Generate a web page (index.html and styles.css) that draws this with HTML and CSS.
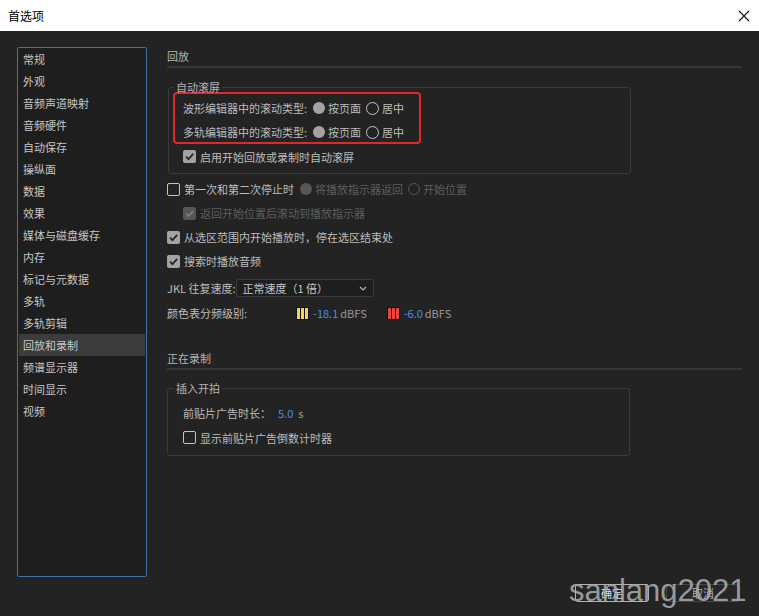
FILE: index.html
```html
<!DOCTYPE html>
<html lang="zh-CN">
<head>
<meta charset="utf-8">
<title>首选项</title>
<link rel="stylesheet" href="styles.css">
</head>
<body>
<div class="window">
  <div class="titlebar">
    <span class="title">首选项</span>
    <svg class="close" width="12" height="12" viewBox="0 0 12 12"><path d="M1 1L11 11M11 1L1 11" stroke="#111" stroke-width="1.1" fill="none"/></svg>
  </div>
  <div class="content">
    <ul class="sidebar">
      <li>常规</li>
      <li>外观</li>
      <li>音频声道映射</li>
      <li>音频硬件</li>
      <li>自动保存</li>
      <li>操纵面</li>
      <li>数据</li>
      <li>效果</li>
      <li>媒体与磁盘缓存</li>
      <li>内存</li>
      <li>标记与元数据</li>
      <li>多轨</li>
      <li>多轨剪辑</li>
      <li class="active">回放和录制</li>
      <li>频谱显示器</li>
      <li>时间显示</li>
      <li>视频</li>
    </ul>
    <div class="main">
      <div class="section-head">回放</div>
      <div class="group g1">
        <div class="group-title">自动滚屏</div>
        <div class="redbox">
          <div class="row">
            <span class="label">波形编辑器中的滚动类型:</span>
            <span class="rb on"></span><span class="opt">按页面</span>
            <span class="rb"></span><span class="opt">居中</span>
          </div>
          <div class="row">
            <span class="label">多轨编辑器中的滚动类型:</span>
            <span class="rb on"></span><span class="opt">按页面</span>
            <span class="rb"></span><span class="opt">居中</span>
          </div>
        </div>
        <div class="row in1">
          <span class="cb on"><svg viewBox="0 0 13 13"><path d="M3 6.6L5.5 9.2L10.2 3.9" /></svg></span>
          <span class="cbt">启用开始回放或录制时自动滚屏</span>
        </div>
      </div>

      <div class="rows">
        <div class="row">
          <span class="cb off"></span>
          <span class="cbt">第一次和第二次停止时</span>
          <span class="rb on dis r1"></span><span class="opt dis">将播放指示器返回</span>
          <span class="rb dis"></span><span class="opt dis">开始位置</span>
        </div>
        <div class="row in2">
          <span class="cb on dis"><svg viewBox="0 0 13 13"><path d="M3 6.6L5.5 9.2L10.2 3.9" /></svg></span>
          <span class="cbt dis">返回开始位置后滚动到播放指示器</span>
        </div>
        <div class="row">
          <span class="cb on"><svg viewBox="0 0 13 13"><path d="M3 6.6L5.5 9.2L10.2 3.9" /></svg></span>
          <span class="cbt">从选区范围内开始播放时，停在选区结束处</span>
        </div>
        <div class="row">
          <span class="cb on"><svg viewBox="0 0 13 13"><path d="M3 6.6L5.5 9.2L10.2 3.9" /></svg></span>
          <span class="cbt">搜索时播放音频</span>
        </div>
        <div class="row jkl">
          <span class="label">JKL 往复速度:</span>
          <div class="select">
            <span>正常速度（1 倍）</span>
            <svg class="chev" width="8" height="5" viewBox="0 0 8 5"><path d="M1 1L4 4L7 1" /></svg>
          </div>
        </div>
        <div class="row meters">
          <span class="label">颜色表分频级别:</span>
          <svg class="meter m1" width="13" height="13" viewBox="0 0 13 13"><rect width="13" height="13" fill="#111"/><rect x="1" y="1" width="3" height="11" fill="#f2d35a"/><rect x="5" y="1" width="3" height="11" fill="#f2d35a"/><rect x="9" y="1" width="3" height="11" fill="#f2d35a"/></svg>
          <span class="num">-18.1</span><span class="unit">dBFS</span>
          <svg class="meter m2" width="13" height="13" viewBox="0 0 13 13"><rect width="13" height="13" fill="#111"/><rect x="1" y="1" width="3" height="11" fill="#e8473f"/><rect x="5" y="1" width="3" height="11" fill="#e8473f"/><rect x="9" y="1" width="3" height="11" fill="#e8473f"/></svg>
          <span class="num">-6.0</span><span class="unit">dBFS</span>
        </div>
      </div>

      <div class="section-head rec">正在录制</div>
      <div class="group g2">
        <div class="group-title">插入开拍</div>
        <div class="row tall">
          <span class="label">前贴片广告时长：</span>
          <span class="num val">5.0</span><span class="unit s">s</span>
        </div>
        <div class="row tall">
          <span class="cb off"></span>
          <span class="cbt">显示前贴片广告倒数计时器</span>
        </div>
      </div>
    </div>
  </div>
  <div class="footer">
    <button class="btn primary">确定</button>
    <button class="btn">取消</button>
  </div>
  <div class="watermark">sanlang2021</div>
</div>
</body>
</html>
```

FILE: styles.css
```css
html, body {
  margin: 0;
  padding: 0;
  background: #232323;
}
body {
  font-family: "Noto Sans CJK SC", "Noto Sans", sans-serif;
  font-size: 11px;
  color: #c2c2c2;
}
.window {
  position: relative;
  width: 759px;
  height: 616px;
  overflow: hidden;
  background: #232323;
}
.titlebar {
  height: 31px;
  background: #ffffff;
  display: flex;
  align-items: center;
  justify-content: space-between;
  padding: 0 9px 0 8px;
  box-sizing: border-box;
}
.title {
  font-size: 12px;
  color: #000;
}
.close {
  display: block;
}
.content {
  display: flex;
  padding: 16px 0 0 17px;
  gap: 20px;
}
.sidebar {
  list-style: none;
  margin: 0;
  padding: 0 1px;
  width: 130px;
  height: 530px;
  box-sizing: border-box;
  border: 1px solid #3f72a8;
  border-radius: 2px;
  background: #1e1e1e;
}
.sidebar li {
  height: 22px;
  line-height: 22px;
  padding-left: 4px;
  color: #c6c6c6;
  white-space: nowrap;
}
.sidebar li.active {
  background: #3c3c3c;
}
.main {
  width: 575px;
}
.section-head {
  height: 19px;
  line-height: 19px;
  border-bottom: 2px solid #363636;
  color: #b4b4b4;
}
.section-head.rec {
  margin-top: 24px;
}
.group {
  width: 463px;
  box-sizing: border-box;
  border: 1px solid #3a3a3a;
  border-radius: 3px;
}
.g1 {
  margin: 19px 0 0 1px;
  padding: 0 0 5px 4px;
}
.g2 {
  margin-top: 18px;
  padding: 0 0 5px 15px;
}
.group-title {
  width: fit-content;
  line-height: 14px;
  height: 14px;
  padding: 0 2px;
  background: #232323;
  color: #b4b4b4;
}
.g1 .group-title {
  margin: -8px 0 -2px 1px;
}
.g2 .group-title {
  margin: -8px 0 5px -9px;
}
.redbox {
  width: 248px;
  height: 52px;
  box-sizing: border-box;
  border: 2px solid #e3262b;
  border-radius: 4px;
  padding: 2px 0 0 8px;
  margin-bottom: 1px;
}
.row {
  display: flex;
  align-items: center;
  height: 24px;
  white-space: nowrap;
}
.g1 .row.in1 {
  height: 23px;
  padding-left: 10px;
}
.row.tall {
  height: 25px;
}
.rows {
  margin-top: 3px;
}
.row.in2 {
  padding-left: 16px;
}
.label {
  color: #bdbdbd;
}
.rb {
  width: 12px;
  height: 12px;
  border-radius: 50%;
  box-sizing: border-box;
  border: 1.5px solid #c4c4c4;
  margin: 0 3px 0 5px;
  flex: none;
}
.rb.on {
  border: none;
  background: #a2a2a2;
  margin-left: 6px;
}
.redbox .rb:not(.on) {
  width: 13px;
  height: 13px;
}
.rb.dis {
  border-color: #575757;
}
.rb.on.dis {
  background: #575757;
}
.rb.r1 {
  margin-left: 6px;
}
.opt {
  color: #bdbdbd;
}
.dis {
  color: #5e5e5e;
}
.cb {
  width: 13px;
  height: 13px;
  box-sizing: border-box;
  border-radius: 2px;
  flex: none;
  margin-right: 4px;
}
.cb.off {
  border: 1.5px solid #c4c4c4;
}
.cb.on {
  background: #a3a3a3;
}
.cb svg {
  display: block;
  width: 13px;
  height: 13px;
}
.cb svg path {
  fill: none;
  stroke: #262626;
  stroke-width: 1.8;
}
.cb.on.dis {
  background: #565656;
}
.cb.on.dis svg path {
  stroke: #7c7c7c;
}
.cbt {
  color: #bdbdbd;
}
.cbt.dis {
  color: #5e5e5e;
}
.row.jkl {
  margin-top: 3px;
}
.select {
  margin-left: 0;
  width: 138px;
  height: 18px;
  box-sizing: border-box;
  border: 1px solid #3a3a3a;
  border-radius: 2px;
  background: #1e1e1e;
  display: flex;
  align-items: center;
  justify-content: space-between;
  padding: 0 6px 0 6px;
  color: #c8c8c8;
}
.chev path {
  fill: none;
  stroke: #b8b8b8;
  stroke-width: 1.1;
}
.row.meters {
  margin-top: 1px;
}
.meter {
  flex: none;
  display: block;
}
.m1 {
  margin-left: 49px;
  margin-right: 4px;
}
.m2 {
  margin-left: 20px;
  margin-right: 4px;
}
.num {
  color: #4a8fe2;
  margin-right: 2px;
}
.unit {
  color: #9a9a9a;
}
.val {
  margin-left: 7px;
  margin-right: 5px;
}
.footer {
  display: flex;
  justify-content: flex-end;
  gap: 17px;
  padding-right: 19px;
  margin-top: 7px;
}
.btn {
  width: 74px;
  height: 18px;
  box-sizing: border-box;
  border: 1px solid #464646;
  border-radius: 3px;
  background: #262626;
  font-family: "Noto Sans CJK SC", "Noto Sans", sans-serif;
  font-size: 11px;
  color: #a8b0c8;
  padding: 0;
  line-height: 16px;
}
.btn.primary {
  border-color: #b4b4b4;
  color: #d8e0f4;
}
.watermark {
  position: absolute;
  left: 569px;
  top: 575px;
  font-family: "Liberation Sans", sans-serif;
  font-size: 31px;
  line-height: 31px;
  color: rgba(170, 170, 170, 0.88);
  white-space: nowrap;
}
```
